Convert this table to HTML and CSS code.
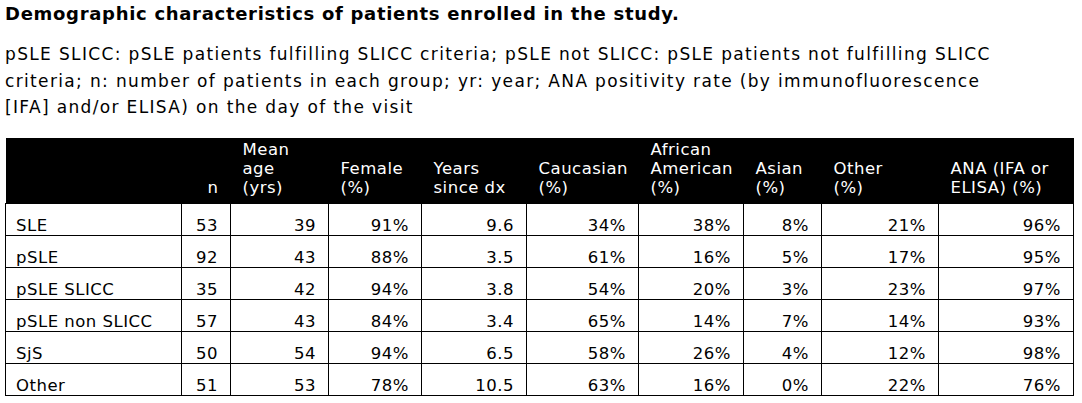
FILE: index.html
```html
<!DOCTYPE html>
<html>
<head>
<meta charset="utf-8">
<link rel="stylesheet" href="styles.css">
</head>
<body>
<h1 class="title">Demographic characteristics of patients enrolled in the study.</h1>
<p class="caption">pSLE SLICC: pSLE patients fulfilling SLICC criteria; pSLE not SLICC: pSLE patients not fulfilling SLICC<br>criteria; n: number of patients in each group; yr: year; ANA positivity rate (by immunofluorescence<br>[IFA] and/or ELISA) on the day of the visit</p>
<table class="data">
  <colgroup>
    <col class="c-label"><col class="c-n"><col class="c-age"><col class="c-fem"><col class="c-yrs"><col class="c-cau"><col class="c-afr"><col class="c-asi"><col class="c-oth"><col class="c-ana">
  </colgroup>
  <thead>
    <tr>
      <th class="lbl"></th>
      <th class="num">n</th>
      <th>Mean<br>age<br>(yrs)</th>
      <th>Female<br>(%)</th>
      <th>Years<br>since dx</th>
      <th>Caucasian<br>(%)</th>
      <th>African<br>American<br>(%)</th>
      <th>Asian<br>(%)</th>
      <th>Other<br>(%)</th>
      <th>ANA (IFA or<br>ELISA) (%)</th>
    </tr>
  </thead>
  <tbody>
    <tr><td class="lbl">SLE</td><td>53</td><td>39</td><td>91%</td><td>9.6</td><td>34%</td><td>38%</td><td>8%</td><td>21%</td><td>96%</td></tr>
    <tr><td class="lbl">pSLE</td><td>92</td><td>43</td><td>88%</td><td>3.5</td><td>61%</td><td>16%</td><td>5%</td><td>17%</td><td>95%</td></tr>
    <tr><td class="lbl">pSLE SLICC</td><td>35</td><td>42</td><td>94%</td><td>3.8</td><td>54%</td><td>20%</td><td>3%</td><td>23%</td><td>97%</td></tr>
    <tr><td class="lbl">pSLE non SLICC</td><td>57</td><td>43</td><td>84%</td><td>3.4</td><td>65%</td><td>14%</td><td>7%</td><td>14%</td><td>93%</td></tr>
    <tr><td class="lbl">SjS</td><td>50</td><td>54</td><td>94%</td><td>6.5</td><td>58%</td><td>26%</td><td>4%</td><td>12%</td><td>98%</td></tr>
    <tr><td class="lbl">Other</td><td>51</td><td>53</td><td>78%</td><td>10.5</td><td>63%</td><td>16%</td><td>0%</td><td>22%</td><td>76%</td></tr>
  </tbody>
</table>
</body>
</html>
```
FILE: styles.css
```css
html, body {
  margin: 0;
  padding: 0;
  background: #fff;
}
body {
  padding: 0 5px;
  font-family: "DejaVu Sans", Verdana, sans-serif;
  color: #000;
  font-size: 16px;
}
.title {
  margin: 0;
  padding-top: 4px;
  font-size: 18px;
  font-weight: bold;
  line-height: 20px;
  letter-spacing: 0.7px;
}
.caption {
  margin: 17px 0 0;
  font-size: 17px;
  line-height: 26.5px;
  letter-spacing: 1.35px;
  white-space: nowrap;
}
.data {
  margin-top: 17px;
  border-collapse: collapse;
  table-layout: fixed;
  width: 1068px;
  font-size: 16.5px;
  letter-spacing: 0.5px;
}
.c-label { width: 176px; }
.c-n { width: 49px; }
.c-age { width: 98px; }
.c-fem { width: 93px; }
.c-yrs { width: 105px; }
.c-cau { width: 112px; }
.c-afr { width: 105px; }
.c-asi { width: 78px; }
.c-oth { width: 117px; }
.c-ana { width: 135px; }
.data thead tr {
  background: #000;
  color: #fff;
}
.data th {
  font-weight: normal;
  text-align: left;
  vertical-align: bottom;
  white-space: nowrap;
  padding: 2px 12px 6px;
  line-height: 19px;
}
.data th.num {
  text-align: right;
}
.data td {
  border: 1px solid #000;
  padding: 12px 12px 0;
  line-height: 19px;
  text-align: right;
  white-space: nowrap;
}
.data td.lbl {
  text-align: left;
  padding-left: 10px;
}
```
